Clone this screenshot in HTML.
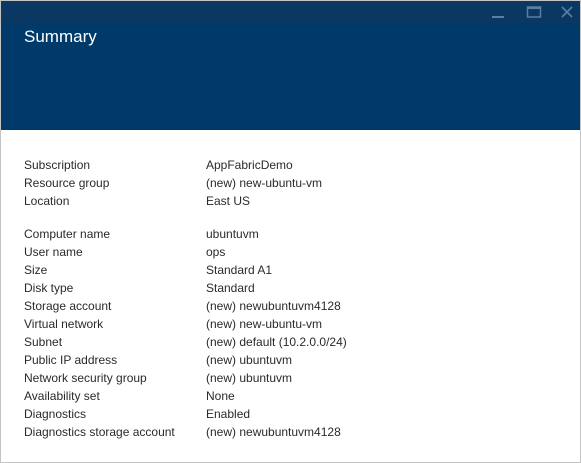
<!DOCTYPE html>
<html><head><style>
body{margin:0;width:581px;height:463px;background:#fff;font-family:"Liberation Sans",sans-serif;overflow:hidden}
.frame{position:absolute;left:0;top:0;width:579px;height:461px;border:1px solid #c4c4c4}
.top{position:absolute;left:1px;top:1px;width:579px;height:22px;background:#0b3863}
.hdr{position:absolute;left:1px;top:23px;width:579px;height:107px;background:#003a6b}
.title{position:absolute;left:24px;top:27px;color:#fff;font-size:17px}
.r{position:absolute;font-size:12px;color:#2a2a2a;line-height:18px}
</style></head><body>
<div class="frame"></div>
<div class="top"></div>
<div class="hdr"></div>
<div class="title">Summary</div>
<svg style="position:absolute;left:480px;top:4px" width="100" height="18">
<rect x="12" y="12" width="12" height="2" fill="#5b7fa0"/>
<rect x="47.5" y="3" width="13" height="10" fill="none" stroke="#5b7fa0" stroke-width="1.5"/>
<rect x="47" y="2.5" width="14" height="2.5" fill="#5b7fa0"/>
<path d="M82 3 L92 13 M92 3 L82 13" stroke="#5b7fa0" stroke-width="1.6"/>
</svg>
<div class="r" style="left:24px;top:156px">Subscription<br>Resource group<br>Location</div>
<div class="r" style="left:206px;top:156px">AppFabricDemo<br>(new) new-ubuntu-vm<br>East US</div>
<div class="r" style="left:24px;top:225px">Computer name<br>User name<br>Size<br>Disk type<br>Storage account<br>Virtual network<br>Subnet<br>Public IP address<br>Network security group<br>Availability set<br>Diagnostics<br>Diagnostics storage account</div>
<div class="r" style="left:206px;top:225px">ubuntuvm<br>ops<br>Standard A1<br>Standard<br>(new) newubuntuvm4128<br>(new) new-ubuntu-vm<br>(new) default (10.2.0.0/24)<br>(new) ubuntuvm<br>(new) ubuntuvm<br>None<br>Enabled<br>(new) newubuntuvm4128</div>
</body></html>
